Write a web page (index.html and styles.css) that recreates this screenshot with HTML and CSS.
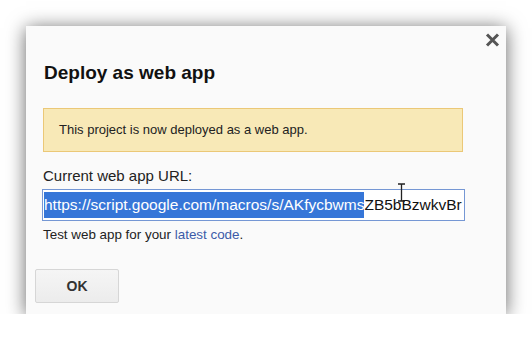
FILE: index.html
```html
<!DOCTYPE html>
<html lang="en">
<head>
  <meta charset="UTF-8" />
  <title>Deploy as web app</title>
  <link rel="stylesheet" href="styles.css">
</head>
<body>
  <div class="dialog">
    <svg class="close" width="15" height="14" viewBox="0 0 15 14">
      <path d="M2 1.5l11 11M13 1.5l-11 11" stroke="#555" stroke-width="3" fill="none"/>
    </svg>
    <h1>Deploy as web app</h1>

    <div class="notice">This project is now deployed as a web app.</div>

    <label class="url-label">Current web app URL:</label>
    <div class="url-field">
      <div class="url-box"><span class="selected">https://script.google.com/macros/s/AKfycbwms</span>ZB5bBzwkvBr</div>
      <svg class="ibeam" width="9" height="19" viewBox="0 0 9 19">
        <path d="M1 1h3l0.5 1l0.5-1h3M4.5 2v15M1 18h3l0.5-1l0.5 1h3" stroke="#222" stroke-width="1.3" fill="none"/>
      </svg>
    </div>
    <p class="hint">Test web app for your <a href="#">latest code</a>.</p>

    <div class="actions">
      <button class="ok">OK</button>
    </div>
  </div>
</body>
</html>
```

FILE: styles.css
```css
* {
  box-sizing: border-box;
}

body {
  margin: 0;
  background: #ffffff;
  font-family: 'Liberation Sans', Arial, sans-serif;
  color: #222;
}

.dialog {
  position: relative;
  margin: 26px 0 0 26px;
  width: 480px;
  height: 288px;
  background: #fafafa;
  box-shadow: 0 2px 18px rgba(0, 0, 0, 0.6);
  padding: 36px 17px 0 17px;
}

.close {
  position: absolute;
  top: 7px;
  right: 6px;
}

h1 {
  margin: 0 0 0 1px;
  font-size: 19px;
  line-height: 22px;
  font-weight: bold;
  color: #111;
}

.notice {
  margin-top: 24px;
  width: 420px;
  height: 44px;
  background: #f8e9b7;
  border: 1px solid #ebc877;
  padding: 13px 0 0 15px;
  font-size: 13px;
  line-height: 15px;
  color: #222;
}

.url-label {
  display: block;
  margin-top: 15px;
  font-size: 15px;
  line-height: 18px;
  color: #222;
}

.url-field {
  position: relative;
  margin: 4px 0 0 -1px;
}

.url-box {
  width: 423px;
  height: 32px;
  border: 1px solid #7597d4;
  background: #fff;
  padding: 2px 0 0 1px;
  font-size: 15.5px;
  line-height: 26px;
  white-space: nowrap;
  overflow: hidden;
  color: #111;
}

.url-box .selected {
  display: inline-block;
  background: #3676d8;
  color: #fff;
}

.ibeam {
  position: absolute;
  top: -6px;
  left: 355px;
}

.hint {
  margin: 6px 0 0 0;
  font-size: 13.4px;
  line-height: 16px;
  color: #222;
}

.hint a {
  color: #3c5aa8;
  text-decoration: none;
}

.actions {
  margin: 26px 0 0 -8px;
}

.ok {
  width: 84px;
  height: 34px;
  background: linear-gradient(#f5f5f5, #ececec);
  border: 1px solid #d6d6d6;
  border-radius: 2px;
  font-family: 'Liberation Sans', Arial, sans-serif;
  font-size: 14px;
  font-weight: bold;
  color: #333;
}
```
